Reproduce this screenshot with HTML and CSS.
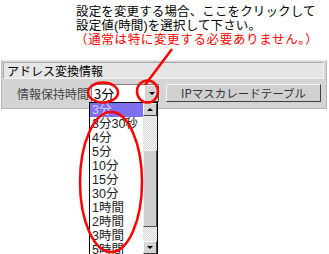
FILE: index.html
```html
<!DOCTYPE html>
<html lang="ja">
<head>
  <meta charset="UTF-8" />
  <title>アドレス変換情報</title>
  <link rel="stylesheet" href="styles.css">
</head>
<body>
  <div class="note">
    <p>設定を変更する場合、ここをクリックして</p>
    <p>設定値(時間)を選択して下さい。</p>
    <p class="note-red">（通常は特に変更する必要ありません。）</p>
  </div>

  <div class="panel">
    <div class="panel-title">アドレス変換情報</div>
    <div class="panel-row">
      <span class="row-label">情報保持時間</span>
      <div class="select">
        <span class="select-value">3分</span>
        <span class="select-btn"><span class="tri-down"></span></span>
      </div>
      <button class="table-button">IPマスカレードテーブル</button>
    </div>
  </div>

  <div class="dropdown">
    <ul class="options">
      <li class="selected">3分</li>
      <li>3分30秒</li>
      <li>4分</li>
      <li>5分</li>
      <li>10分</li>
      <li>15分</li>
      <li>30分</li>
      <li>1時間</li>
      <li>2時間</li>
      <li>3時間</li>
      <li>5時間</li>
    </ul>
    <div class="scrollbar">
      <span class="sb-btn"><span class="tri-up"></span></span>
      <span class="sb-track">
        <span class="sb-thumb"></span>
      </span>
      <span class="sb-btn"><span class="tri-down"></span></span>
    </div>
  </div>

  <!-- 赤い注釈 -->
  <svg class="marks" width="329" height="254" viewBox="0 0 329 254">
    <line x1="172" y1="49" x2="145" y2="85" />
    <ellipse cx="103" cy="92.5" rx="15" ry="10" />
    <ellipse cx="147.5" cy="91.5" rx="10.5" ry="11" />
    <ellipse cx="111" cy="182" rx="31" ry="70" />
  </svg>
</body>
</html>
```

FILE: styles.css
```css
body {
  margin: 0;
  width: 329px;
  height: 254px;
  overflow: hidden;
  background: #fff;
  font-family: "Noto Sans CJK JP", sans-serif;
  color: #000;
  position: relative;
}

.note {
  padding: 5px 0 0 76px;
  font-family: "Liberation Sans", "Noto Sans CJK JP", sans-serif;
  font-size: 12.5px;
  letter-spacing: 0.13px;
  line-height: 14px;
  height: 60px;
  box-sizing: border-box;
}

.note p {
  margin: 0;
  white-space: nowrap;
}

.note-red {
  color: #ff0000;
  letter-spacing: 0.66px;
  margin-left: -1px !important;
}

.panel {
  margin-left: 1px;
  width: 326px;
  box-sizing: border-box;
  background: #d4d4d4;
  border: 1px solid #b8b8b8;
  border-top-color: #e8e8e8;
  padding: 1px 2px 3px 1px;
}

.panel-title {
  height: 15px;
  background: #e6e6e6;
  border: 1px solid #a8a8a8;
  border-right-color: #f4f4f4;
  border-bottom-color: #f4f4f4;
  font-size: 12px;
  line-height: 15px;
  padding-left: 3px;
}

.panel-row {
  display: flex;
  align-items: center;
  height: 24px;
  margin-top: 1px;
  padding-top: 1px;
}

.row-label {
  font-size: 12px;
  color: #444;
  margin-left: 14px;
  width: 74px;
}

.select {
  display: flex;
  width: 69px;
  height: 19px;
  box-sizing: border-box;
  background: #fff;
  border: 1px solid #808080;
  border-right-color: #e8e8e8;
  border-bottom-color: #e8e8e8;
}

.select-value {
  flex: 1;
  font-size: 13px;
  line-height: 17px;
  padding-left: 2px;
}

.select-btn {
  width: 15px;
  background: #d4d4d4;
  border: 1px solid #fff;
  border-right-color: #404040;
  border-bottom-color: #404040;
  box-sizing: border-box;
  display: flex;
  align-items: center;
  justify-content: center;
}

.tri-down {
  width: 0;
  height: 0;
  border-left: 3px solid transparent;
  border-right: 3px solid transparent;
  border-top: 3px solid #000;
}

.tri-up {
  width: 0;
  height: 0;
  border-left: 3px solid transparent;
  border-right: 3px solid transparent;
  border-bottom: 3px solid #000;
}

.table-button {
  margin-left: 6px;
  width: 155px;
  height: 18px;
  padding: 0;
  background: #d0d0d0;
  border: 1px solid #f0f0f0;
  border-right-color: #404040;
  border-bottom-color: #404040;
  font-family: "Noto Sans CJK JP", sans-serif;
  font-size: 11.5px;
  color: #333;
  line-height: 16px;
}

.dropdown {
  position: absolute;
  left: 89px;
  top: 102px;
  width: 69px;
  height: 152px;
  box-sizing: border-box;
  background: #fff;
  border: 1px solid #000;
  border-bottom: none;
  display: flex;
}

.options {
  list-style: none;
  margin: 0;
  padding: 0;
  flex: 1;
}

.options li {
  height: 14px;
  line-height: 14px;
  font-family: "Liberation Sans", "Noto Sans CJK JP", sans-serif;
  font-size: 12.5px;
  padding-left: 2px;
  white-space: nowrap;
  color: #222;
}

.options li.selected {
  background: #7e6ff0;
  color: #d8d0ff;
}

.scrollbar {
  width: 14px;
  display: flex;
  flex-direction: column;
}

.sb-btn {
  height: 13px;
  background: #d4d4d4;
  border: 1px solid #fff;
  border-right-color: #404040;
  border-bottom-color: #404040;
  box-sizing: border-box;
  display: flex;
  align-items: center;
  justify-content: center;
}

.sb-track {
  flex: 1;
  background-color: #ececec;
  background-image: repeating-conic-gradient(#d8d8d8 0 25%, #f4f4f4 0 50%);
  background-size: 2px 2px;
  padding-top: 34px;
  padding-bottom: 14px;
  display: flex;
}

.sb-thumb {
  flex: 1;
  background: #cfcfcf;
  border: 1px solid #f0f0f0;
  border-right-color: #505050;
  border-bottom-color: #505050;
}

.marks {
  position: absolute;
  left: 0;
  top: 0;
  pointer-events: none;
}

.marks line,
.marks ellipse {
  fill: none;
  stroke: #ff0000;
  stroke-width: 2.5;
}
```
